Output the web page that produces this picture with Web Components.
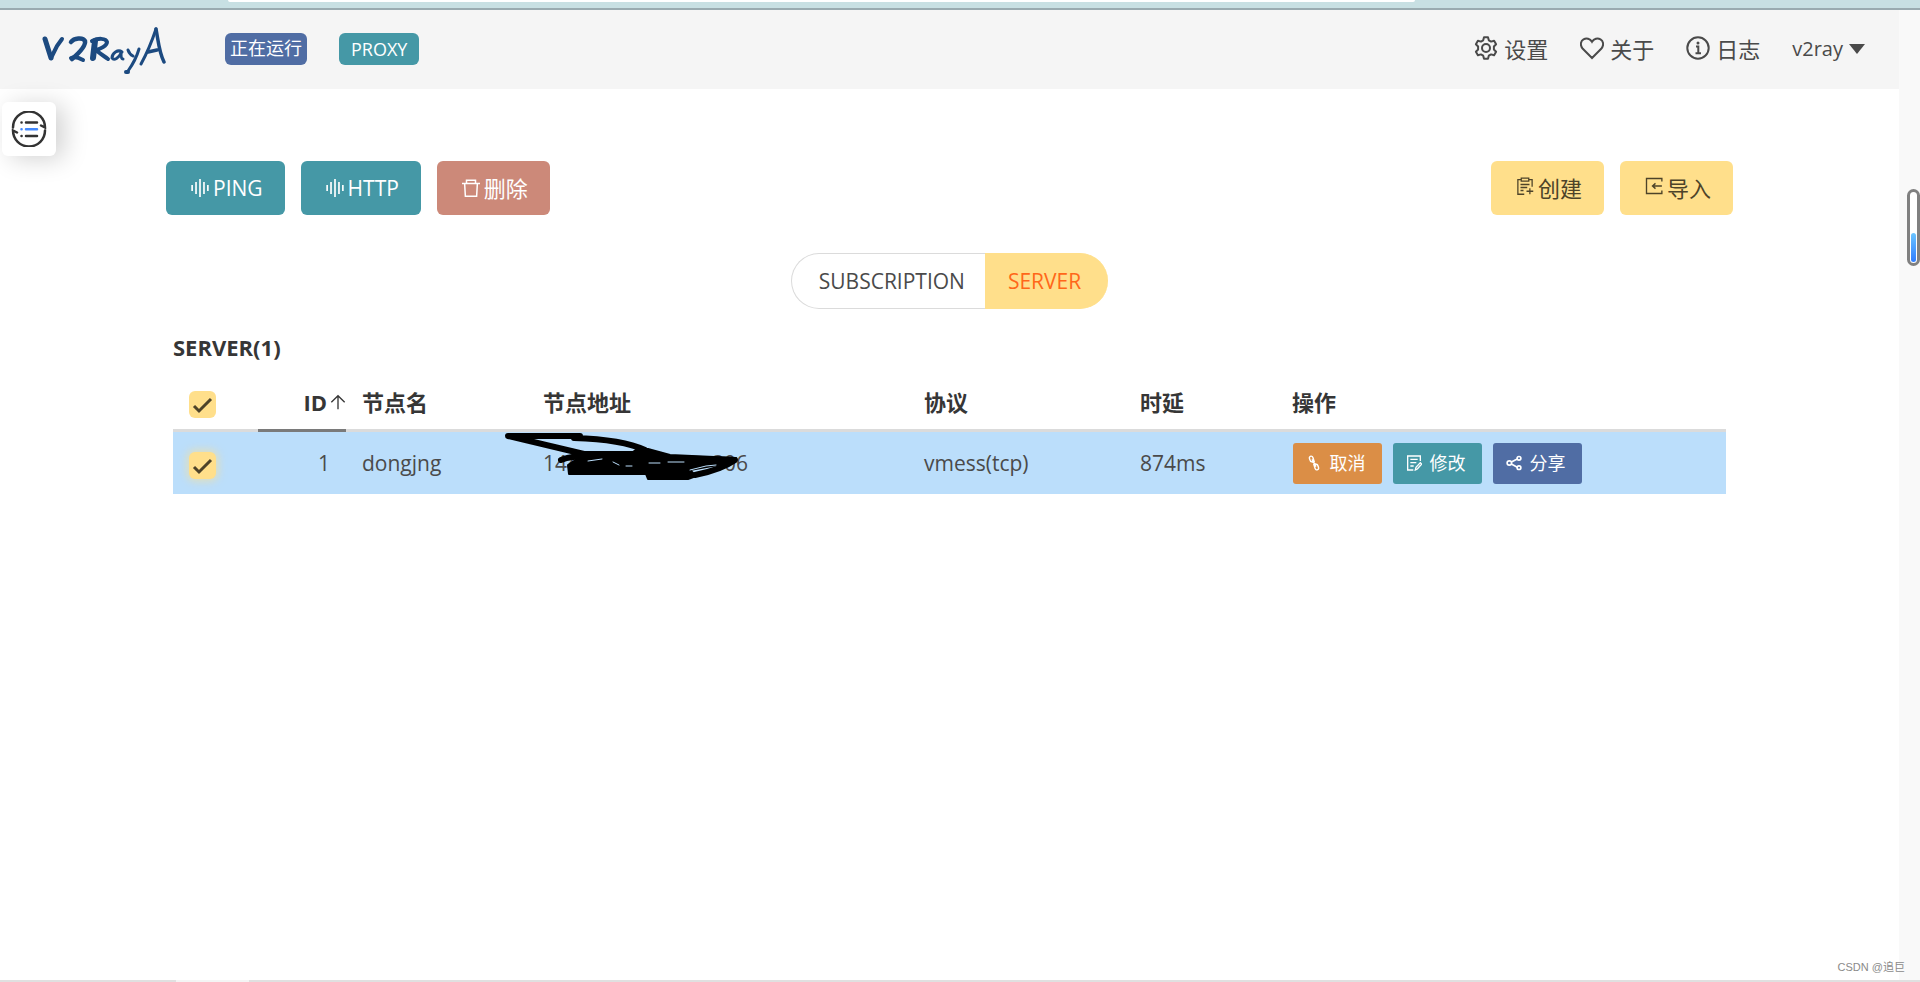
<!DOCTYPE html>
<html lang="zh-CN">
<head>
<meta charset="utf-8">
<title>v2rayA</title>
<style>
html, body { margin: 0; height: 100%; }
body { background: #fff; color: #4a4a4a; font: 22px/32px "Open Sans", "Noto Sans CJK SC", sans-serif; overflow: hidden; }
</style>
</head>
<body>
<v2-app></v2-app>
<script>
const define = (name, html, setup) => {
  const tpl = document.createElement('template');
  tpl.innerHTML = html;
  customElements.define(name, class extends HTMLElement {
    constructor() {
      super();
      this.attachShadow({ mode: 'open' }).append(tpl.content.cloneNode(true));
    }
    connectedCallback() { if (setup) setup(this, this.shadowRoot); }
  });
};

const ICONS = {
  gear: '<path d="M10 1.2h4l.8 3.1 2.3 1.3 3-.9 2 3.5-2.2 2.3v3l2.2 2.3-2 3.5-3-.9-2.3 1.3-.8 3.1h-4l-.8-3.1-2.3-1.3-3 .9-2-3.5 2.200-2.300v-3L1.900 8.200l2-3.500 3 .9 2.300-1.300z" stroke-width="2" stroke-linejoin="round"/><circle cx="12" cy="12" r="4" stroke-width="2"/>',
  heart: '<path d="M12 22 2.800 12.800C-.2 9.500.5 5 3.500 3.300 6.500 1.700 10 2.600 12 5.800 14 2.600 17.500 1.700 20.500 3.300c3 1.700 3.700 6.200.7 9.500z" stroke-width="2"/>',
  info: '<circle cx="12" cy="12" r="10.700" stroke-width="2"/><path d="M10 10.500h2.300v6.500M9.500 17.200h5.500" stroke-width="2"/><circle cx="12" cy="7" r="1.500" fill="currentColor" stroke="none"/>',
  wave: '<path d="M1.500 8v8M6.700 4v16M12 0v24M17.300 4v16M22.500 8v8" stroke-width="2.200"/>',
  trash: '<path d="M0 6h24M6 5.500V1.500h12V5.500M3.500 6l1 17h15l1-17" stroke-width="2"/>',
  create: '<path d="M7 3.500H2.500V23H11M17 3.500h4.500V13M7 1.500h10v4H7zM6 10h12M6 14h9M6 18h4M18.500 15v8M14 19h9" stroke-width="1.700"/>',
  load: '<path d="M22.500 6V2H2v20h20.500V18M22.500 12H10M14 8.500 10 12l4 3.500" stroke-width="1.800"/>',
  unlink: '<path d="M11 11 7 9.500C4.500 5 4.500 3 6.500 2s4 .5 4.500 4l1.500 5M13 13l4 1.500c2.500 4.500 2.500 6.500.5 7.500s-4-.5-4.500-4l-1.500-5M9 6.500l6 11" stroke-width="2.200"/>',
  edit: '<path d="M21.500 9V1.500h-19v21H11M6.500 6.500h11M6.500 11.500h9M6.500 16.500h5M14 22.500l1-4 6.500-7 2 2-6.500 7.500z" stroke-width="2"/>',
  share: '<path d="M8 10.500 17 6M8 13.500l9 5" stroke-width="2.500"/><circle cx="5" cy="12" r="3.300" stroke-width="2.500"/><circle cx="19.500" cy="5" r="2.800" stroke-width="2.500"/><circle cx="19.500" cy="19" r="2.800" stroke-width="2.500"/>',
  up: '<path d="M12 23V3M2 12.500 12 2.500l10 10" stroke-width="2"/>'
};

define('v2-icon', `<style>
:host { display: inline-flex; flex: none; width: var(--size, 24px); height: var(--size, 24px); }
svg { width: 100%; height: 100%; fill: none; stroke: currentColor; }
</style><svg viewBox="0 0 24 24" aria-hidden="true"></svg>`,
(el, root) => { root.querySelector('svg').innerHTML = ICONS[el.getAttribute('name')]; });

define('v2-button', `<style>
:host { display: block; }
button { display: flex; align-items: center; justify-content: center; box-sizing: border-box; height: 54px; padding: 0 22px 0 25px; border: 0; border-radius: 6px; background: var(--bg); color: var(--fg, #fff); font: inherit; white-space: nowrap; gap: 4px; --size: 18px; }
:host([latin]) button { font-size: 21px; }
:host([small]) button { width: 89px; height: 41px; padding: 0 4px 0 0; border-radius: 3px; font-size: 18px; gap: 8px; --size: 16px; }
:host([tone=teal]) { --bg: #4598a6; }
:host([tone=red]) { --bg: #cc8979; }
:host([tone=yellow]) { --bg: #ffdf8b; --fg: #4d4329; }
:host([tone=yellow]) ::slotted(v2-icon) { margin-bottom: 4px; }
:host([tone=orange]) { --bg: #db8e46; }
:host([tone=blue]) { --bg: #506da4; }
</style><button type="button"><slot name="icon"></slot><span><slot></slot></span></button>`);

define('v2-tag', `<style>
:host { display: block; box-sizing: border-box; height: 32px; line-height: 32px; border-radius: 6px; background: #4598a6; color: #fff; font-size: 18px; padding: 0 12px; }
:host([tone=blue]) { background: #506da4; padding: 0 5px; line-height: 30px; }
</style><slot></slot>`);

define('v2-logo', `<style>
:host { display: block; width: 124px; height: 48px; }
svg { display: block; width: 100%; height: 100%; fill: none; stroke: #1c4a80; stroke-linecap: round; stroke-linejoin: round; }
</style><svg viewBox="0 0 124 48" role="img" aria-label="V2RayA">
<path stroke-width="5" d="M3 13 9 32"/><path stroke-width="4" d="M9 32 15 20 20 13"/>
<path stroke-width="4.500" d="M29 16c3-4 12-5 14-1 1 5-6 12-13 18"/><path stroke-width="4" d="M29 32c5-2 8 0 12 2"/>
<path stroke-width="6" d="M53 15 51 32"/><path stroke-width="4" d="M50 15c6-3 14-3 15 1 0 4-7 7-11 8 3 3 8 6 12 9"/>
<path stroke-width="3" d="M80 26c-4-3-10 1-10 6 2 3 7 0 9-5 0 3 0 6 2 6"/>
<path stroke-width="3" d="M86 24c1 3 3 5 5 6M97 23c-2 7-6 15-11 22"/><path stroke-width="4" d="M84 46h2"/>
<path stroke-width="3" d="M99 38c5-9 11-23 15-35"/><path stroke-width="3.500" d="M114 3c2 10 3 23 8 33M106 26l9-2"/>
</svg>`);

define('v2-nav-link', `<style>
:host { display: block; }
a { display: flex; align-items: center; gap: 6px; color: inherit; text-decoration: none; --size: 24px; }
:host([latin]) { font-size: 20px; }
</style><a href="#"><slot name="icon"></slot><span><slot></slot></span><slot name="after"></slot></a>`);

define('v2-header', `<style>
:host { display: flex; align-items: center; box-sizing: border-box; height: 79px; padding: 0 34px 0 42px; background: #f5f5f5; }
v2-logo { margin: 0 59px 0 0; }
.tags { display: flex; gap: 32px; padding-bottom: 2px; }
nav { display: flex; gap: 32px; margin-left: auto; padding-bottom: 2px; }
nav v2-icon { margin-bottom: 2px; }
.caret { width: 0; border: 8px solid transparent; border-top: 10px solid #4a4a4a; border-bottom: 0; }
</style>
<v2-logo></v2-logo>
<div class="tags"><v2-tag tone="blue">正在运行</v2-tag><v2-tag>PROXY</v2-tag></div>
<nav>
<v2-nav-link><v2-icon slot="icon" name="gear"></v2-icon>设置</v2-nav-link>
<v2-nav-link><v2-icon slot="icon" name="heart"></v2-icon>关于</v2-nav-link>
<v2-nav-link><v2-icon slot="icon" name="info"></v2-icon>日志</v2-nav-link>
<v2-nav-link latin>v2ray<i class="caret" slot="after"></i></v2-nav-link>
</nav>`);

define('v2-tabs', `<style>
:host { display: flex; justify-content: center; font-size: 21px; }
button { box-sizing: border-box; height: 56px; border: 1px solid #dbdbdb; background: #fff; color: inherit; font: inherit; padding: 0 20px 0 27px; border-radius: 28px 0 0 28px; border-right: 0; }
.on { background: #ffdf8b; border-color: #ffdf8b; color: #ff6719; border-radius: 0 28px 28px 0; padding: 0 27px 0 22px; }
</style><button type="button">SUBSCRIPTION</button><button type="button" class="on">SERVER</button>`);

define('v2-check', `<style>
:host { display: block; width: 27px; height: 27px; }
input { appearance: none; display: block; width: 27px; height: 27px; margin: 0; border-radius: 6px; background: #ffdf8b url("data:image/svg+xml,%3Csvg xmlns='http://www.w3.org/2000/svg' viewBox='0 0 27 27'%3E%3Cpath d='M5 15l5 5L22 8' fill='none' stroke='%234d4329' stroke-width='3'/%3E%3C/svg%3E"); }
:host([glow]) input { box-shadow: 0 0 8px 2px #ffdf8b99; }
</style><input type="checkbox" checked aria-label="选择">`);

define('v2-servers', `<style>
:host { display: block; padding: 0 7px; }
h2 { margin: 0 0 12px; font: inherit; font-weight: 700; color: #363636; }
table { width: 100%; border-collapse: separate; border-spacing: 0; table-layout: fixed; }
th { height: 57px; box-sizing: border-box; padding: 0 16px; text-align: left; border-bottom: 3px solid #dbdbdb; color: #363636; }
td { height: 62px; box-sizing: border-box; padding: 0 16px; background: #bbdefb; font-size: 21px; }
v2-check { margin-top: 5px; }
th.sorted { border-bottom-color: #7a7a7a; padding-right: 0; }
.sorted div { display: flex; justify-content: flex-end; align-items: center; gap: 3px; --size: 16px; }
.num { text-align: right; }
.ops { display: flex; gap: 11px; padding-left: 1px; }
.addr { position: relative; display: flex; justify-content: space-between; width: 205px; }
.addr svg { position: absolute; left: -43px; top: -22px; width: 260px; height: 70px; fill: none; stroke: #000; stroke-width: 6; stroke-linecap: round; stroke-linejoin: round; }
</style>
<h2>SERVER(1)</h2>
<table>
<colgroup><col style="width:85px"><col style="width:88px"><col style="width:181px"><col style="width:381px"><col style="width:216px"><col style="width:152px"><col></colgroup>
<thead><tr><th><v2-check></v2-check></th><th class="sorted"><div>ID<v2-icon name="up"></v2-icon></div></th><th>节点名</th><th>节点地址</th><th>协议</th><th>时延</th><th>操作</th></tr></thead>
<tbody><tr><td><v2-check glow></v2-check></td><td class="num">1</td><td>dongjng</td>
<td><div class="addr"><span>144</span><span>306</span>
<svg viewBox="0 0 260 70" aria-hidden="true">
<path d="M80 11H8L84 29H132M74 13C105 14 130 18 145 25M61 35C70 31 80 31 90 31M148 28 170 33 235 35C225 42 210 47 195 50"/>
<path stroke-width="2" fill="#000" d="M84 27H133L137 24 148 24 170 30 236 33 234 37 190 45 196 51 188 54 148 54 146 49H69L68 40 80 32z"/>
<path stroke="#bbdefb" stroke-width="1" d="M88 36 102 34M113 37 119 40M126 41H132M149 38H160M168 37H184M190 45 206 41 216 40"/>
</svg></div></td>
<td>vmess(tcp)</td><td>874ms</td>
<td><div class="ops">
<v2-button small tone="orange"><v2-icon slot="icon" name="unlink"></v2-icon>取消</v2-button>
<v2-button small tone="teal"><v2-icon slot="icon" name="edit"></v2-icon>修改</v2-button>
<v2-button small tone="blue"><v2-icon slot="icon" name="share"></v2-icon>分享</v2-button>
</div></td></tr></tbody>
</table>`);

define('v2-fab', `<style>
:host { display: block; }
button { display: grid; place-items: center; width: 54px; height: 54px; padding: 0; border: 0; border-radius: 6px; background: #fff; box-shadow: 8px 3px 24px #0000002e; }
svg { width: 36px; height: 36px; fill: none; stroke: #333; stroke-width: 2.500; stroke-linecap: round; }
</style><button type="button" aria-label="订阅"><svg viewBox="0 0 36 36"><path d="M2 16.500a16 16 0 0 1 32 0l-4-2M34 19.500a16 16 0 0 1-32 0l4 2M15 11.500h11M15 25h11M10.500 11.500h.1M10.500 25h.1"/><path stroke="#448aff" d="M15 18.200h11M10.500 18.200h.1"/></svg></button>`);

define('v2-app', `<style>
:host { display: flex; flex-direction: column; height: 100%; position: relative; }
.chrome { flex: none; height: 8px; background: #c8e0e3; border-bottom: 2px solid #9aabb0; }
.chrome div { height: 2px; margin: 0 505px 0 228px; background: #fff; border-radius: 0 0 8px 8px; }
.body { flex: 1; display: flex; }
.page { flex: 1; position: relative; }
.rail { flex: none; width: 21px; background: #f9f9f9; position: relative; }
.thumb { position: absolute; right: 0; top: 179px; box-sizing: border-box; width: 13px; height: 77px; border: 3px solid #808080; border-radius: 7px; background: #fff; display: flex; flex-direction: column; justify-content: flex-end; padding: 1px; }
.thumb i { height: 29px; border-radius: 3px; background: linear-gradient(#6cc5ff, #2f7dff); }
main { padding: 72px 166px 0; }
.bar { display: flex; gap: 16px; margin-bottom: 38px; }
.bar .push { margin-left: auto; }
v2-tabs { margin-bottom: 22px; }
v2-fab { position: absolute; left: 2px; top: 92px; }
footer { flex: none; height: 2px; background: linear-gradient(90deg, #e0e0e0 176px, #f4f4f4 176px 249px, #e0e0e0 249px); }
.mark { position: absolute; right: 15px; bottom: 6px; font: 11px/18px "Liberation Sans", "Noto Sans CJK SC", sans-serif; color: #8a8a8a; }
</style>
<div class="chrome"><div></div></div>
<div class="body">
<div class="page">
<v2-header></v2-header>
<v2-fab></v2-fab>
<main>
<div class="bar">
<v2-button latin tone="teal"><v2-icon slot="icon" name="wave"></v2-icon>PING</v2-button>
<v2-button latin tone="teal"><v2-icon slot="icon" name="wave"></v2-icon>HTTP</v2-button>
<v2-button tone="red"><v2-icon slot="icon" name="trash"></v2-icon>删除</v2-button>
<v2-button class="push" tone="yellow"><v2-icon slot="icon" name="create"></v2-icon>创建</v2-button>
<v2-button tone="yellow"><v2-icon slot="icon" name="load"></v2-icon>导入</v2-button>
</div>
<v2-tabs></v2-tabs>
<v2-servers></v2-servers>
</main>
</div>
<div class="rail"><div class="thumb"><i></i></div></div>
</div>
<footer></footer>
<div class="mark">CSDN @追巨</div>`);
</script>
</body>
</html>
